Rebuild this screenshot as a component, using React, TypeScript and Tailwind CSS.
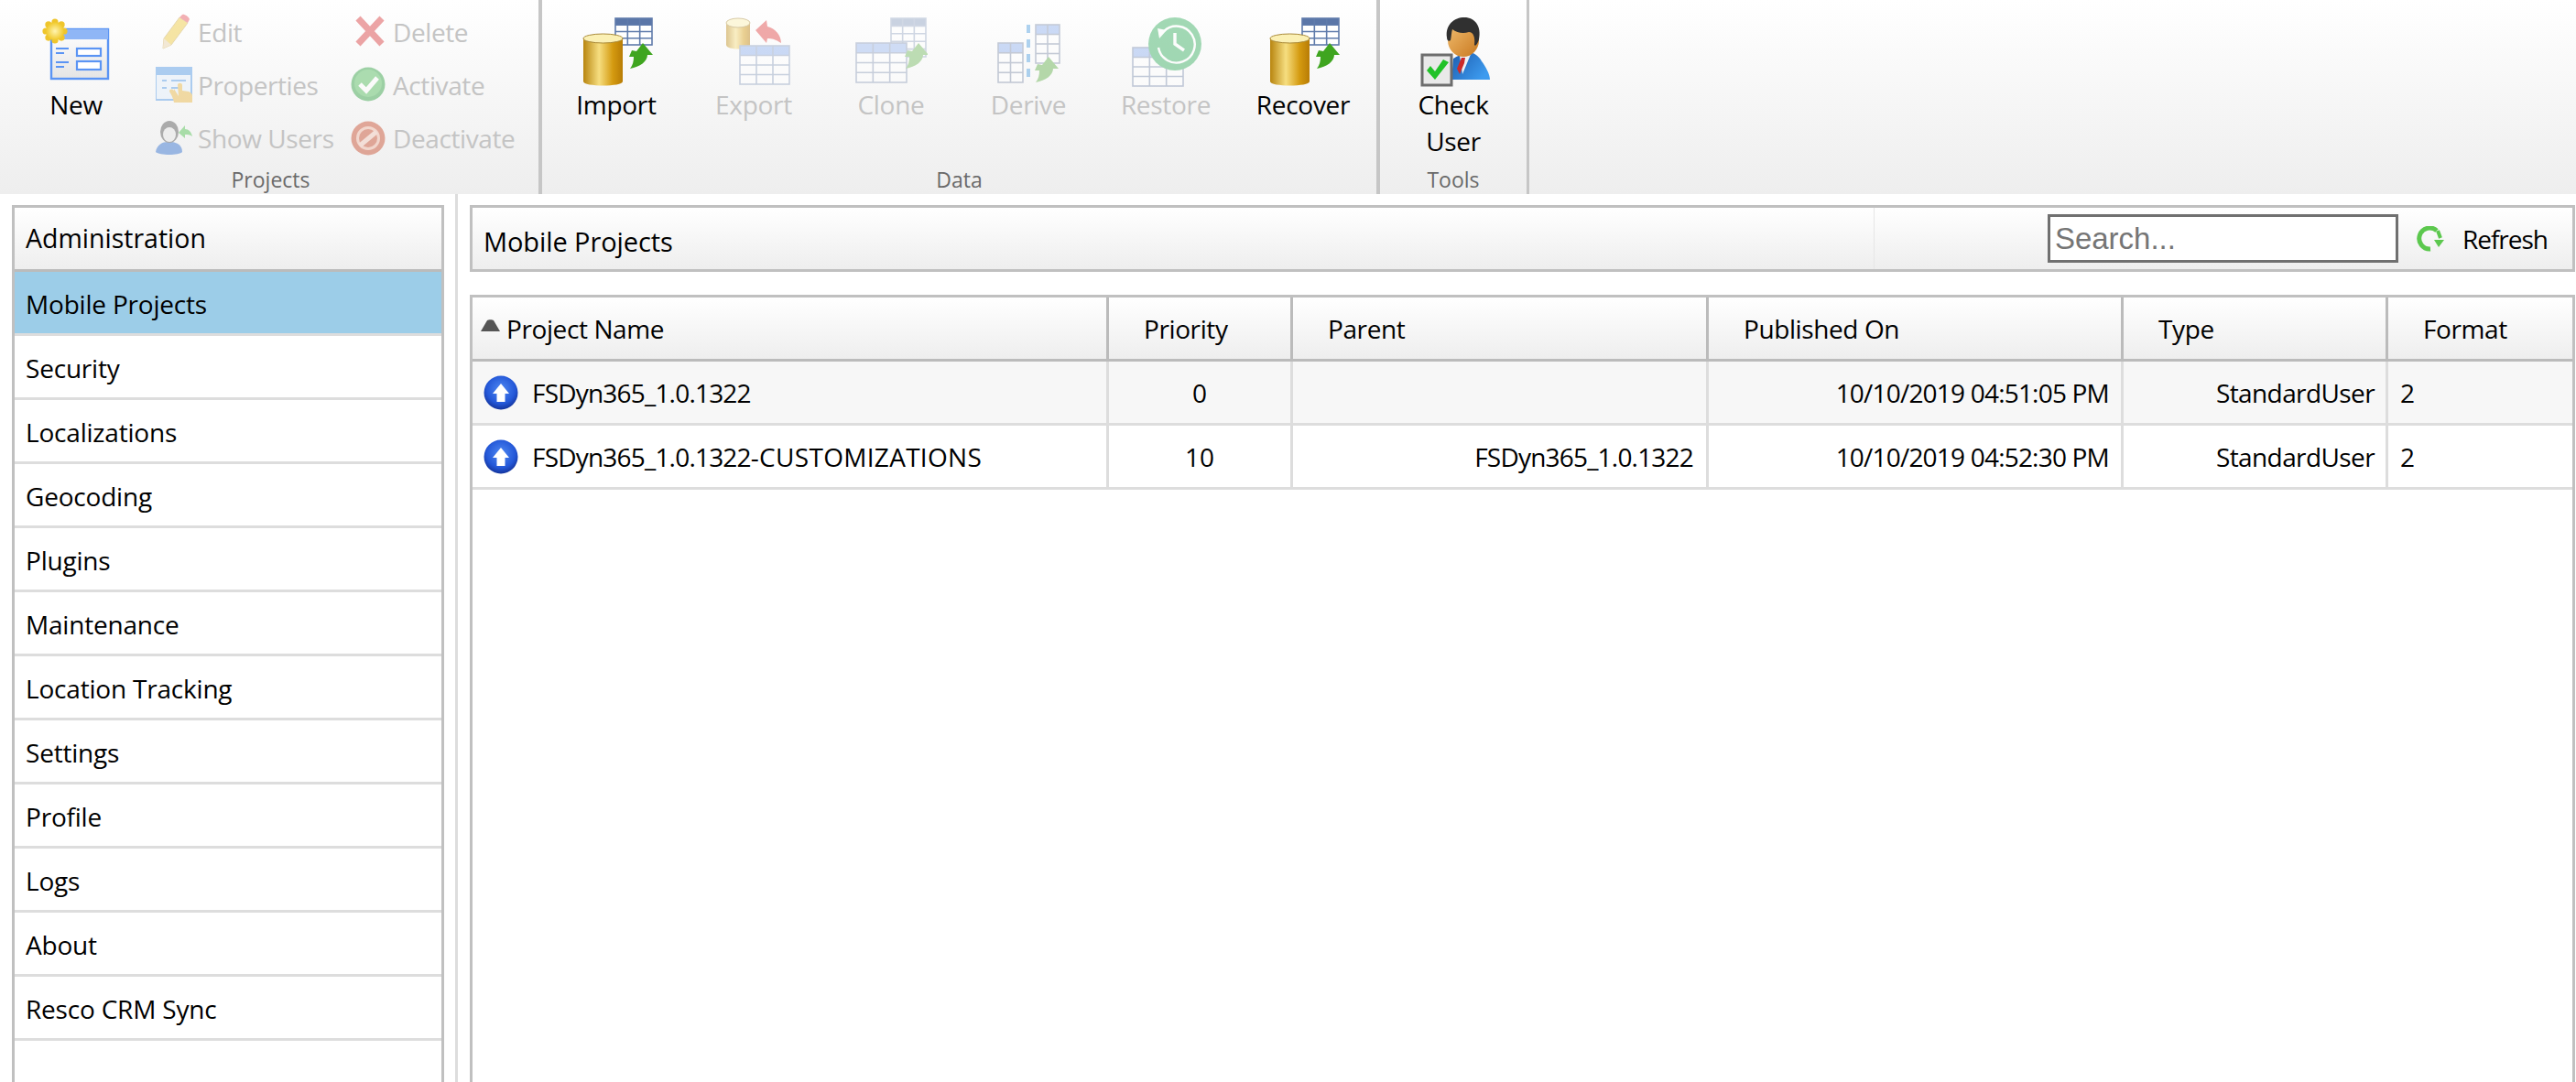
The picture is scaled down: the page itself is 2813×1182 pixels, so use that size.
import type { ReactNode } from 'react';

const menuItems = ['Mobile Projects', 'Security', 'Localizations', 'Geocoding', 'Plugins', 'Maintenance', 'Location Tracking', 'Settings', 'Profile', 'Logs', 'About', 'Resco CRM Sync'];

const rows = [
  { name: 'FSDyn365_1.0.1322', suffix: '', priority: '0', parent: '', published: '10/10/2019 04:51:05 PM', bg: 'bg-[#f7f7f7]' },
  { name: 'FSDyn365_1.0.1322', suffix: '-CUSTOMIZATIONS', priority: '10', parent: 'FSDyn365_1.0.1322', published: '10/10/2019 04:52:30 PM', bg: 'bg-white' },
];

// Small table glyph used by the data icons
function Grid({ x, y, w, h, cols, rowsN, head, line, body = '#ffffff' }: { x: number; y: number; w: number; h: number; cols: number; rowsN: number; head: string; line: string; body?: string }) {
  const headH = h / (rowsN + 1);
  const lines = [];
  for (let i = 1; i < cols; i++) {
    lines.push(<line key={'c' + i} x1={x + (w * i) / cols} y1={y} x2={x + (w * i) / cols} y2={y + h} stroke={line} strokeWidth="1.6" />);
  }
  for (let i = 1; i <= rowsN; i++) {
    lines.push(<line key={'r' + i} x1={x} y1={y + headH * i} x2={x + w} y2={y + headH * i} stroke={line} strokeWidth="1.6" />);
  }
  return (
    <g>
      <rect x={x} y={y} width={w} height={h} fill={body} />
      <rect x={x} y={y} width={w} height={headH} fill={head} />
      {lines}
      <rect x={x} y={y} width={w} height={h} fill="none" stroke={line} strokeWidth="1.6" />
    </g>
  );
}

function GreenArrow({ x, y, fill = '#3fa51f', s = 1 }: { x: number; y: number; fill?: string; s?: number }) {
  return (
    <path
      transform={`translate(${x} ${y}) scale(${s})`}
      d="M15 0 L26 13 L20 13 C20 20 12 26 1 28 C4 24 5 20 5 15 L0 15 L3 8 L8 9 Z"
      fill={fill}
    />
  );
}

function Cylinder({ x, y, w, h, id }: { x: number; y: number; w: number; h: number; id: string }) {
  return (
    <g>
      <defs>
        <linearGradient id={id} x1="0" x2="1" y1="0" y2="0">
          <stop offset="0" stopColor="#b8850f" />
          <stop offset="0.4" stopColor="#f6de80" />
          <stop offset="0.75" stopColor="#d49a10" />
          <stop offset="1" stopColor="#b87c05" />
        </linearGradient>
      </defs>
      <path d={`M${x} ${y + 5} V${y + h - 5} C${x} ${y + h + 1} ${x + w} ${y + h + 1} ${x + w} ${y + h - 5} V${y + 5} Z`} fill={`url(#${id})`} />
      <ellipse cx={x + w / 2} cy={y + 5} rx={w / 2} ry={5} fill="#fbf0b4" stroke="#a98a3a" strokeWidth="1" />
    </g>
  );
}

function DbImportIcon({ id }: { id: string }) {
  return (
    <svg width="80" height="76" viewBox="0 0 80 76" className="blur-[0.5px]">
      <Grid x={39} y={1} w={40} h={29} cols={3} rowsN={3} head="#5a76a8" line="#5f7bab" />
      <Cylinder x={4} y={18} w={43} h={57} id={id} />
      <GreenArrow x={54} y={28} />
    </svg>
  );
}

function ExportIcon() {
  return (
    <svg width="80" height="76" viewBox="0 0 80 76" className="opacity-45 blur-[0.5px]">
      <Cylinder x={10} y={1} w={26} h={34} id="cylExport" />
      <path d="M42 14 L54 3 L55 10 C64 12 70 20 70 28 C64 24 60 23 55 23 L54 28 Z" fill="#e04444" />
      <Grid x={25} y={31} w={54} h={42} cols={3} rowsN={3} head="#8fb0ee" line="#8ea0bf" />
    </svg>
  );
}

function CloneIcon() {
  return (
    <svg width="80" height="76" viewBox="0 0 80 76" className="opacity-40 blur-[0.5px]">
      <Grid x={40} y={1} w={38} h={42} cols={3} rowsN={4} head="#7e93b8" line="#8ea0bf" />
      <Grid x={2} y={28} w={55} h={43} cols={3} rowsN={3} head="#8fb0ee" line="#7e8fb0" />
      <GreenArrow x={55} y={28} fill="#62b04a" />
    </svg>
  );
}

function DeriveIcon() {
  return (
    <svg width="80" height="76" viewBox="0 0 80 76" className="opacity-45 blur-[0.5px]">
      <Grid x={7} y={28} w={27} h={43} cols={2} rowsN={3} head="#8fb0ee" line="#8290aa" />
      <line x1="40" y1="8" x2="40" y2="72" stroke="#4f9fe0" strokeWidth="4" strokeDasharray="9 7" />
      <Grid x={48} y={8} w={26} h={42} cols={2} rowsN={3} head="#8fb0ee" line="#8290aa" />
      <GreenArrow x={47} y={43} fill="#62b04a" />
    </svg>
  );
}

function RestoreIcon() {
  return (
    <svg width="80" height="76" viewBox="0 0 80 76" className="opacity-45 blur-[0.5px]">
      <Grid x={4} y={33} w={55} h={42} cols={3} rowsN={3} head="#8fb0ee" line="#7e8fb0" />
      <circle cx="50" cy="29" r="29" fill="#35ad5e" />
      <path d="M38 15 A20 20 0 1 1 32 33" fill="none" stroke="#fff" strokeWidth="2.4" />
      <path d="M31 12 L41 14 L33 23 Z" fill="#fff" />
      <path d="M50 17 V29 L60 36" fill="none" stroke="#fff" strokeWidth="3.4" />
    </svg>
  );
}

function CheckUserIcon() {
  return (
    <svg width="80" height="76" viewBox="0 0 80 76" className="blur-[0.4px]">
      <defs>
        <linearGradient id="suit" x1="0" x2="1" y1="0" y2="0.6">
          <stop offset="0" stopColor="#1c5cae" />
          <stop offset="1" stopColor="#3d9bef" />
        </linearGradient>
        <linearGradient id="face" x1="0" x2="1" y1="0" y2="1">
          <stop offset="0" stopColor="#f1bd6f" />
          <stop offset="1" stopColor="#c8781f" />
        </linearGradient>
      </defs>
      <path d="M38 68 L40 45 C44 42 50 40 56 38 C62 38 68 42 71 48 C75 53 80 62 80 68 Z" fill="url(#suit)" />
      <path d="M47 42 L55 40 L60 38 L50 62 Z" fill="#eef2f6" />
      <path d="M49 44 L53 44 L52 50 L47 62 L44 56 Z" fill="#cc2a2a" />
      <ellipse cx="51" cy="25" rx="17" ry="18" fill="url(#face)" />
      <path d="M33 22 C31 8 41 0 52 0 C64 0 71 10 68 24 C66 30 64 32 63 30 C64 22 62 16 57 16 C51 18 44 17 39 13 C38 16 38 20 37 25 C35 27 33 25 33 22 Z" fill="#303030" />
      <rect x="6" y="41" width="32" height="33" fill="#e9e9e9" stroke="#6d6d6d" strokeWidth="3" />
      <path d="M11 58 L20 68 L35 49 L29 46 L20 59 L15 53 Z" fill="#21c228" />
    </svg>
  );
}

function NewIcon() {
  const sunRays = [0, 45, 90, 135, 180, 225, 270, 315];
  return (
    <svg width="80" height="76" viewBox="0 0 80 76" className="blur-[0.4px]">
      <defs>
        <linearGradient id="newBody" x1="0" x2="0" y1="0" y2="1">
          <stop offset="0" stopColor="#ffffff" />
          <stop offset="1" stopColor="#e4e4e4" />
        </linearGradient>
        <radialGradient id="sun">
          <stop offset="0" stopColor="#fff4b0" />
          <stop offset="1" stopColor="#f0c828" />
        </radialGradient>
      </defs>
      <rect x="13" y="13" width="62" height="54" fill="url(#newBody)" stroke="#5a94f4" strokeWidth="2.4" />
      <rect x="13" y="13" width="62" height="11" fill="#8fb6f6" />
      <path d="M18 34 H32 M18 39 H27 M18 49 H32 M18 54 H27" stroke="#5a94f4" strokeWidth="2.2" />
      <rect x="41" y="34" width="26" height="8" fill="#fff" stroke="#5a94f4" strokeWidth="2.2" />
      <rect x="41" y="48" width="26" height="9" fill="#fff" stroke="#5a94f4" strokeWidth="2.2" />
      {sunRays.map((a) => (
        <circle key={a} cx={17 + 10 * Math.cos((a * Math.PI) / 180)} cy={15 + 10 * Math.sin((a * Math.PI) / 180)} r="3.6" fill="#efc52c" />
      ))}
      <circle cx="17" cy="15" r="10" fill="url(#sun)" />
    </svg>
  );
}

function SmallIcon({ children }: { children: ReactNode }) {
  return (
    <svg width="40" height="40" viewBox="0 0 40 40" className="opacity-45 blur-[0.4px]">
      {children}
    </svg>
  );
}

const EditIcon = () => (
  <SmallIcon>
    <path d="M9 27 L26 4 L35 10 L17 34 L8 38 Z" fill="#eec93a" stroke="#c9a84e" strokeWidth="1" />
    <path d="M8 38 L9 27 L17 34 Z" fill="#e9d2a8" />
    <path d="M26 4 L29 1 C31 0 36 3 37 6 L35 10 Z" fill="#e5525a" />
  </SmallIcon>
);

const PropertiesIcon = () => (
  <SmallIcon>
    <rect x="0" y="0" width="39" height="36" fill="#e3effc" stroke="#4f97e6" strokeWidth="2" />
    <rect x="0" y="0" width="40" height="9" fill="#4f97e6" />
    <path d="M7 15 H12 M17 15 H33 M7 23 H12 M17 23 H28" stroke="#4f97e6" strokeWidth="2.2" />
    <path d="M20 24 L25 32 L24 20 C24 17 29 17 29 20 V26 L36 27 C39 28 40 30 40 32 V39 H20 C19 34 17 30 15 27 C15 24 18 24 20 26 Z" fill="#e9b53e" />
  </SmallIcon>
);

const ShowUsersIcon = () => (
  <SmallIcon>
    <path d="M0 35 C1 27 8 24 13 24 H18 C24 25 29 28 29 35 C26 39 4 39 0 35 Z" fill="#2f6fd0" />
    <ellipse cx="15" cy="13" rx="10" ry="12" fill="#555" />
    <ellipse cx="15" cy="16" rx="7" ry="8" fill="#e6e6e6" />
    <path d="M25 14 L32 6 V10 C36 10 39 13 40 18 C37 16 35 16 32 16 V20 Z" fill="#4fc24f" />
  </SmallIcon>
);

const DeleteIcon = () => (
  <SmallIcon>
    <path d="M8 5 L34 33 M34 5 L8 33" stroke="#d8393b" strokeWidth="7" />
  </SmallIcon>
);

const ActivateIcon = () => (
  <SmallIcon>
    <circle cx="19" cy="19" r="18.5" fill="#2fa040" />
    <circle cx="19" cy="18" r="15" fill="#4fbb58" />
    <path d="M10 19 L17 26 L29 12" fill="none" stroke="#fff" strokeWidth="5" />
  </SmallIcon>
);

const DeactivateIcon = () => (
  <SmallIcon>
    <circle cx="19" cy="20" r="18.5" fill="#c84a2a" />
    <circle cx="19" cy="20" r="11.5" fill="none" stroke="#f0b5a0" strokeWidth="3" />
    <path d="M10 28 L28 13" stroke="#f4c8b8" strokeWidth="5" />
  </SmallIcon>
);

function BlueUpIcon() {
  return (
    <svg width="38" height="40" viewBox="0 0 38 40" className="shrink-0 blur-[0.3px]">
      <defs>
        <radialGradient id="blueUp" cx="0.5" cy="0.4" r="0.6">
          <stop offset="0" stopColor="#4f88f2" />
          <stop offset="0.7" stopColor="#2458d8" />
          <stop offset="1" stopColor="#14349c" />
        </radialGradient>
      </defs>
      <circle cx="19" cy="20" r="18.5" fill="url(#blueUp)" />
      <path d="M19 10 L28 21 L23.5 21 V30 H14.5 V21 H10 Z" fill="#fff" />
    </svg>
  );
}

function LargeButton({ label, icon, disabled }: { label: ReactNode; icon: ReactNode; disabled?: boolean }) {
  return (
    <div className="flex w-[150px] flex-col items-center pt-[19px]">
      {icon}
      <div className={`mt-[-1px] text-center text-[28px] leading-[40px] tracking-[-0.3px] ${disabled ? 'text-[#c4c4c4]' : 'text-black'}`}>{label}</div>
    </div>
  );
}

function SmallButton({ label, icon }: { label: string; icon: ReactNode }) {
  return (
    <div className="flex h-[58px] items-center text-[28px] tracking-[-0.4px] text-[#c4c4c4]">
      <div className="flex w-[46px] shrink-0 items-center">{icon}</div>
      <span>{label}</span>
    </div>
  );
}

function GroupLabel({ children }: { children: ReactNode }) {
  return <div className="h-[32px] text-center text-[23px] leading-[32px] text-[#6a6a6a]">{children}</div>;
}

function Ribbon() {
  return (
    <div className="flex h-[212px] bg-gradient-to-b from-white to-[#eeeeee] pl-[3px]">
      <div className="flex w-[589px] flex-col border-r-4 border-[#c6c6c6]">
        <div className="flex flex-1">
          <div className="w-[155px] pl-[5px]">
            <LargeButton label="New" icon={<NewIcon />} />
          </div>
          <div className="ml-[12px] w-[213px] pt-[6px]">
            <SmallButton label="Edit" icon={<EditIcon />} />
            <SmallButton label="Properties" icon={<PropertiesIcon />} />
            <SmallButton label="Show Users" icon={<ShowUsersIcon />} />
          </div>
          <div className="pt-[6px]">
            <SmallButton label="Delete" icon={<DeleteIcon />} />
            <SmallButton label="Activate" icon={<ActivateIcon />} />
            <SmallButton label="Deactivate" icon={<DeactivateIcon />} />
          </div>
        </div>
        <GroupLabel>Projects</GroupLabel>
      </div>
      <div className="flex w-[915px] flex-col border-r-4 border-[#c6c6c6]">
        <div className="flex flex-1 pl-[6px]">
          <LargeButton label="Import" icon={<DbImportIcon id="cylImport" />} />
          <LargeButton label="Export" icon={<ExportIcon />} disabled />
          <LargeButton label="Clone" icon={<CloneIcon />} disabled />
          <LargeButton label="Derive" icon={<DeriveIcon />} disabled />
          <LargeButton label="Restore" icon={<RestoreIcon />} disabled />
          <LargeButton label="Recover" icon={<DbImportIcon id="cylRecover" />} />
        </div>
        <GroupLabel>Data</GroupLabel>
      </div>
      <div className="flex w-[163px] flex-col border-r-3 border-[#c6c6c6]">
        <div className="flex flex-1 justify-center">
          <div className="flex flex-col items-center pt-[19px]">
            <CheckUserIcon />
            <div className="mt-[-1px] text-center text-[28px] leading-[40px] tracking-[-0.3px] text-black">
              Check
              <br />
              User
            </div>
          </div>
        </div>
        <GroupLabel>Tools</GroupLabel>
      </div>
    </div>
  );
}

function Sidebar() {
  return (
    <div className="h-full w-[497px] pl-[13px] pt-[12px]">
      <div className="h-full w-[472px] border-x-3 border-t-3 border-[#c0c0c0]">
        <div className="flex h-[70px] items-center border-b-3 border-[#bbbbbb] bg-gradient-to-b from-white to-[#eeeeee] pl-[12px] text-[28.5px] text-black">
          Administration
        </div>
        {menuItems.map((item, i) => (
          <div key={item} className={`flex h-[70px] items-center border-b-3 border-[#dddddd] pl-[12px] pt-[2px] text-[28px] tracking-[-0.2px] text-black ${i === 0 ? 'bg-[#9ccde8]' : 'bg-white'}`}>
            {item}
          </div>
        ))}
      </div>
    </div>
  );
}

function Toolbar() {
  return (
    <div className="flex h-[73px] items-center border-3 border-[#c0c0c0] bg-gradient-to-b from-white to-[#eeeeee] pr-[27px]">
      <div className="flex h-full w-[1531px] items-center border-r border-[#e6e6e6] pl-[12px] pt-[7px] text-[29px] tracking-[-0.1px] text-black">Mobile Projects</div>
      <div className="ml-auto flex items-center">
        <input
          readOnly
          placeholder="Search..."
          className="h-[53px] w-[383px] border-3 border-[#707070] bg-white px-[5px] font-['Liberation_Sans',sans-serif] text-[33px] text-black placeholder:text-[#757575]"
        />
        <svg width="30" height="28" viewBox="0 0 30 28" className="ml-[20px] shrink-0">
          <path d="M22 5 A11.5 11.5 0 1 0 15 25" fill="none" stroke="#5cc84e" strokeWidth="5" />
          <path d="M19 15 H30 L24 23 Z" fill="#5cc84e" />
          <path d="M23 5 L26 13" stroke="#5cc84e" strokeWidth="4" />
        </svg>
        <span className="ml-[20px] pt-[1px] text-[28px] tracking-[-1px] text-black">Refresh</span>
      </div>
    </div>
  );
}

const gridCols = 'grid grid-cols-[695px_201px_454px_453px_289px_201px]';

function HeaderCell({ children, last }: { children: ReactNode; last?: boolean }) {
  return <div className={`flex items-center pl-[38px] ${last ? '' : 'border-r-3 border-[#bbbbbb]'}`}>{children}</div>;
}

function ProjectsTable() {
  return (
    <div className="mt-[25px] h-full border-x-3 border-t-3 border-[#c0c0c0] text-[28px] text-black">
      <div className={`${gridCols} h-[70px] border-b-3 border-[#bbbbbb] bg-gradient-to-b from-white to-[#eeeeee] tracking-[-0.4px]`}>
        <div className="flex items-center border-r-3 border-[#bbbbbb] pl-[9px]">
          <svg width="21" height="14" viewBox="0 0 21 14" className="mb-[6px] shrink-0">
            <path d="M7 1 C8 0 13 0 14 1 L21 13 H0 Z" fill="#555555" />
          </svg>
          <span className="ml-[7px]">Project Name</span>
        </div>
        <HeaderCell>Priority</HeaderCell>
        <HeaderCell>Parent</HeaderCell>
        <HeaderCell>Published On</HeaderCell>
        <HeaderCell>Type</HeaderCell>
        <HeaderCell last>Format</HeaderCell>
      </div>
      {rows.map((row) => (
        <div key={row.name + row.suffix} className={`${gridCols} h-[70px] border-b-3 border-[#dddddd] ${row.bg}`}>
          <div className="flex items-center border-r-3 border-[#dddddd] pl-[12px]">
            <BlueUpIcon />
            <span className="ml-[15px]">
              <span className="tracking-[-0.8px]">{row.name}</span>
              <span className="tracking-[0.3px]">{row.suffix}</span>
            </span>
          </div>
          <div className="flex items-center justify-center border-r-3 border-[#dddddd]">{row.priority}</div>
          <div className="flex items-center justify-end border-r-3 border-[#dddddd] pr-[14px] tracking-[-0.8px]">{row.parent}</div>
          <div className="flex items-center justify-end border-r-3 border-[#dddddd] pr-[13px] tracking-[-0.8px]">{row.published}</div>
          <div className="flex items-center justify-end border-r-3 border-[#dddddd] pr-[12px] tracking-[-0.6px]">StandardUser</div>
          <div className="flex items-center pl-[13px]">2</div>
        </div>
      ))}
    </div>
  );
}

export default function App() {
  return (
    <div className="h-[1182px] w-[2813px] overflow-hidden bg-white font-['Open_Sans',sans-serif]">
      <Ribbon />
      <div className="flex h-[970px]">
        <Sidebar />
        <div className="h-full w-[3px] bg-[#dddddd]" />
        <div className="h-full w-[2312px] pl-[13px] pt-[12px]">
          <Toolbar />
          <ProjectsTable />
        </div>
      </div>
    </div>
  );
}
